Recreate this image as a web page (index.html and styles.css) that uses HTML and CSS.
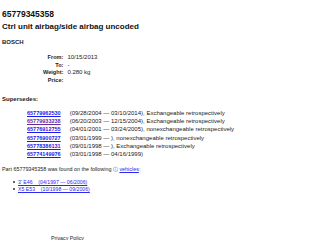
FILE: index.html
```html
<!DOCTYPE html>
<html lang="en">
<head>
    <meta charset="UTF-8">
    <title>65779345358 Ctrl unit airbag/side airbag uncoded</title>
    <link rel="stylesheet" href="styles.css">
</head>
<body>
    <div class="page">
        <h1 class="part-no">65779345358</h1>
        <h2 class="part-name">Ctrl unit airbag/side airbag uncoded</h2>
        <div class="brand">BOSCH</div>

        <table class="info">
            <tr><th>From:</th><td>10/15/2013</td></tr>
            <tr><th>To:</th><td>-</td></tr>
            <tr><th>Weight:</th><td>0.280 kg</td></tr>
            <tr><th>Price:</th><td></td></tr>
        </table>

        <div class="section-title">Supersedes:</div>
        <table class="supersedes">
            <tr><td><a href="#">65779962530</a></td><td>(09/28/2004 &mdash; 03/10/2014), Exchangeable retrospectively</td></tr>
            <tr><td><a href="#" class="visited">65779933238</a></td><td>(06/20/2003 &mdash; 12/15/2004), Exchangeable retrospectively</td></tr>
            <tr><td><a href="#">65776912755</a></td><td>(04/01/2001 &mdash; 03/24/2005), nonexchangeable retrospectively</td></tr>
            <tr><td><a href="#">65776900727</a></td><td>(03/01/1999 &mdash; ), nonexchangeable retrospectively</td></tr>
            <tr><td><a href="#">65778386131</a></td><td>(09/01/1998 &mdash; ), Exchangeable retrospectively</td></tr>
            <tr><td><a href="#">65774149976</a></td><td>(03/01/1998 &mdash; 04/16/1999)</td></tr>
        </table>

        <p class="found">Part 65779345358 was found on the following <span class="info-icon">&#9432;</span> <a href="#" class="plain">vehicles</a>:</p>
        <ul class="vehicles">
            <li><a href="#" class="plain">3' E46 &nbsp;&nbsp; (04/1997 &mdash; 06/2006)</a></li>
            <li><a href="#" class="plain">X5 E53 &nbsp;&nbsp; (10/1998 &mdash; 09/2006)</a></li>
        </ul>

        <div class="footer">Privacy Policy</div>
    </div>
</body>
</html>
```

FILE: styles.css
```css
body {
    margin: 0;
    background: #fff;
    color: #222;
    font-family: "Liberation Sans", Arial, sans-serif;
    font-size: 6px;
}
.page {
    padding: 0 2px;
}
.part-no {
    margin: 9px 0 0;
    font-size: 8.5px;
    line-height: 10px;
    color: #111;
}
.part-name {
    margin: 3px 0 0;
    font-size: 8px;
    line-height: 10px;
    color: #111;
}
.brand {
    margin-top: 6px;
    font-size: 6px;
    font-weight: bold;
    line-height: 8px;
}
.info {
    margin: 8px 0 0 41px;
    border-collapse: collapse;
    font-size: 5.6px;
}
.info th {
    text-align: right;
    font-weight: bold;
    padding: 0 4px 0 0;
    line-height: 7.7px;
    width: 20px;
}
.info td {
    padding: 0;
    font-size: 6px;
    line-height: 7.7px;
}
.section-title {
    margin-top: 10px;
    font-weight: bold;
    font-size: 6px;
    line-height: 8px;
}
.supersedes {
    margin: 6px 0 0 25px;
    border-collapse: collapse;
}
.supersedes td {
    padding: 0 9px 0 0;
    line-height: 8.3px;
    white-space: nowrap;
}
.supersedes a {
    font-size: 5.5px;
}
a {
    color: #1a1aee;
    font-weight: bold;
}
a.visited {
    color: #6a2a9a;
}
a.plain {
    font-weight: normal;
    color: #2a2aee;
}
.info-icon {
    color: #2a2aee;
}
.found {
    margin: 6px 0 0;
    font-size: 5.4px;
    line-height: 8px;
}
.vehicles {
    margin: 6px 0 0;
    padding-left: 11px;
    list-style: none;
    font-size: 5.2px;
    line-height: 7.6px;
}
.vehicles li::before {
    content: "";
    display: inline-block;
    width: 2px;
    height: 2px;
    margin: 0 3px 1px 0;
    border-radius: 50%;
    background: #333;
}
.footer {
    margin-top: 40px;
    padding-left: 49px;
    font-size: 5.3px;
    line-height: 8px;
}
```
